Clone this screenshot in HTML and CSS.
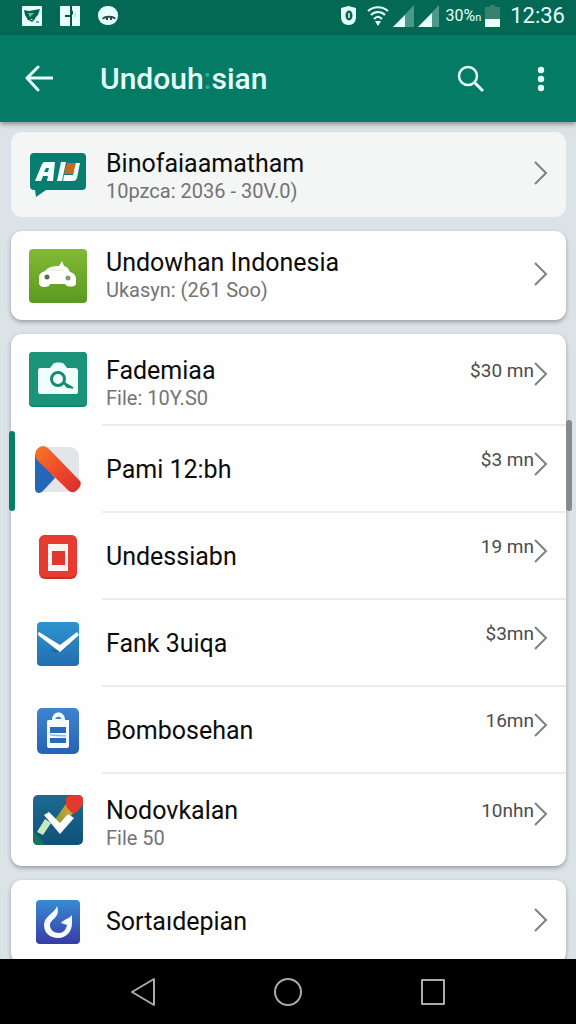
FILE: index.html
```html
<!DOCTYPE html>
<html lang="id">

<head>
    <meta charset="UTF-8">
    <meta name="viewport" content="width=device-width, initial-scale=1">
    <title>Undouh:sian</title>
    <link rel="stylesheet" href="styles.css">
</head>

<body>
    <div class="status">
        <div class="status-left">
            <svg width="20" height="20" viewBox="0 0 20 20"><rect width="20" height="20" rx="1" fill="#e6fffa"/><path d="M2 4l5 1 11-2-2 6-4 4H6L3 9z" fill="#04664f"/><path d="M4 8l2 5 4 2 3-3" fill="none" stroke="#04664f" stroke-width="1.5"/><path d="M6 7h6l-4 4z" fill="#78b7a7"/><path d="M14 16h3" stroke="#04664f"/></svg>
            <svg width="20" height="20" viewBox="0 0 20 20"><rect width="20" height="20" rx="1" fill="#e6fffa"/><path d="M11 0v20M5 10h6" stroke="#04554a" stroke-width="2"/><path d="M11 7l2-3v5z" fill="#04554a"/><path d="M15 7v4" stroke="#9fd0c5"/></svg>
            <svg width="20" height="20" viewBox="0 0 20 20"><rect width="20" height="19" rx="9" fill="#e6fffa"/><path d="M5 13c1-3 11-3 12 0M9 12v2M13 12v2" fill="none" stroke="#234f46" stroke-width="2"/></svg>
        </div>
        <div class="status-right">
            <svg width="17" height="21" viewBox="0 0 17 21"><path d="M1 3l7.500-2L16 3v9c0 5-3 8-7.500 8S1 17 1 12z" fill="#e6fffa"/><ellipse cx="9" cy="10.500" rx="3.500" ry="5" fill="#04664f"/><path d="M9 8v5" stroke="#e6fffa" stroke-width="1.500"/></svg>
            <svg class="wifi" width="22" height="20" viewBox="0 0 22 20"><path d="M1 5c6-5 14-5 20 0M4 9c4-4 10-4 14 0M7 13c3-3 5-3 8 0" fill="none" stroke="#e6fffa" stroke-width="2.200"/><path d="M8 15h6l-3 5z" fill="#e6fffa"/></svg>
            <svg width="21" height="22" viewBox="0 0 21 22"><path d="M21 0v22H0z" fill="#4c9988"/><path d="M12 10v12H0z" fill="#e6fffa"/></svg>
            <svg width="21" height="22" viewBox="0 0 21 22"><path d="M21 0v22H0z" fill="#4c9988"/><path d="M14 8v14H0z" fill="#e6fffa"/></svg>
            <span class="percent">30%<small>n</small></span>
            <svg width="15" height="22" viewBox="0 0 15 22"><path d="M5 0h5v2h5v13H0V2h5z" fill="#39806f"/><path d="M0 14h15v8H0z" fill="#e6fffa"/></svg>
            <time class="clock">12:36</time>
        </div>
    </div>

    <header class="bar">
        <button class="icon-btn" aria-label="Kembali">
            <svg width="28" height="28" viewBox="0 0 28 28"><path d="M27 13H2M13 2L2 13l11 12" fill="none" stroke="#e6fffa" stroke-width="3" stroke-linecap="round" stroke-linejoin="round"/></svg>
        </button>
        <h1>Undouh<span>:</span>sian</h1>
        <button class="icon-btn" aria-label="Cari">
            <svg width="28" height="28" viewBox="0 0 28 28"><circle cx="11" cy="11" r="9" fill="none" stroke="#e6fffa" stroke-width="2.500"/><path d="M17 17l9 9" stroke="#e6fffa" stroke-width="3"/></svg>
        </button>
        <button class="icon-btn" aria-label="Menu">
            <svg width="8" height="26" viewBox="0 0 8 26"><g fill="#e6fffa"><circle cx="4" cy="4" r="3.200"/><circle cx="4" cy="13" r="3.200"/><circle cx="4" cy="22" r="3.200"/></g></svg>
        </button>
    </header>

    <main>
        <section class="card muted">
            <a href="#" class="row">
                <span class="icon">
                    <svg width="58" height="46" viewBox="0 0 58 46"><path d="M5 1h48q4 0 4 4v29q0 4-4 4H17l-10 7-1-7H5q-4 0-4-4V5q0-4 4-4z" fill="#087e70"/><path d="M6 29L13 12q1-2 3-2h10l-2 19h-6l1-5h-5l-2 5zM17 16l-2 4h4l1-4z" fill="#f2fffb" fill-rule="evenodd"/><path d="M28 29l4-19h5l-4 19zM34 29l1-6h9l2-12h5l-3 15q-1 3-4 3z" fill="#f2fffb"/><path d="M38 11h9l-3 11h-9z" fill="#c96a1b"/></svg>
                </span>
                <span class="body"><span class="text"><b>Binofaiaamatham</b><small>10pzca: 2036 - 30V.0)</small></span></span>
                <svg class="chevron" width="14" height="24" viewBox="0 0 14 24"><path d="M1 1l11 11L1 23"/></svg>
            </a>
        </section>

        <section class="card">
            <a href="#" class="row">
                <span class="icon">
                    <svg width="58" height="54" viewBox="0 0 58 54"><defs><linearGradient id="green" x2="0" y2="1"><stop stop-color="#83b936"/><stop offset="1" stop-color="#5b991f"/></linearGradient></defs><rect width="58" height="54" rx="4" fill="url(#green)"/><path d="M10 28c0-3 3-5 6-6 3-4 8-5 14-5l3-5 2 5c4 1 5 4 6 6 4 1 6 4 6 7v4c0 4-5 4-9 3l-2-2H21l-1 2c-5 2-10 1-10-3z" fill="#fff"/><path d="M18 21h17" stroke="#dbeccf"/><circle cx="18" cy="28" r="2.500" fill="#566f50"/><circle cx="39" cy="29" r="2.500" fill="#7c9d74"/></svg>
                </span>
                <span class="body"><span class="text"><b>Undowhan Indonesia</b><small>Ukasyn: (261 Soo)</small></span></span>
                <svg class="chevron" width="14" height="24" viewBox="0 0 14 24"><path d="M1 1l11 11L1 23"/></svg>
            </a>
        </section>

        <section class="card list">
            <a href="#" class="row">
                <span class="icon">
                    <svg width="58" height="56" viewBox="0 0 58 56"><rect width="58" height="55" rx="4" fill="#13866e"/><rect width="58" height="53" rx="4" fill="#1b9379"/><path d="M11 16h10l3-4c1-2 10-2 11 0l3 4h8q3 0 3 3v21q0 2-3 2H12q-3 0-3-2V19q0-3 2-3z" fill="#effffb"/><circle cx="29" cy="27" r="6.500" fill="none" stroke="#1b8873" stroke-width="3"/><path d="M34 30l10 6-6-1z" fill="#1b8873" stroke="#1b8873" stroke-width="1.500"/></svg>
                </span>
                <span class="body"><span class="text"><b>Fademiaa</b><small>File: 10Y.S0</small></span><span class="amount">$30 mn</span></span>
                <svg class="chevron" width="14" height="24" viewBox="0 0 14 24"><path d="M1 1l11 11L1 23"/></svg>
            </a>
            <a href="#" class="row selected">
                <span class="icon">
                    <svg width="46" height="48" viewBox="0 0 46 48"><defs><linearGradient id="red" x2="1" y2="1"><stop stop-color="#f47b27"/><stop offset=".5" stop-color="#ef4a2c"/><stop offset="1" stop-color="#d92c2c"/></linearGradient></defs><rect x="1" y="1" width="43" height="45" rx="9" fill="#e4e5e9"/><path d="M0 8l20 24L7 46q-7 3-7-4z" fill="#2467b8"/><path d="M2 3q6-6 12 0l31 32q2 3-1 7l-3 3q-4 3-8-1L3 15q-5-6-1-12z" fill="url(#red)"/></svg>
                </span>
                <span class="body"><span class="text"><b>Pami 12:bh</b></span><span class="amount">$3 mn</span></span>
                <svg class="chevron" width="14" height="24" viewBox="0 0 14 24"><path d="M1 1l11 11L1 23"/></svg>
            </a>
            <a href="#" class="row">
                <span class="icon">
                    <svg width="38" height="44" viewBox="0 0 38 44"><rect width="38" height="44" rx="6" fill="#c9302a"/><rect width="38" height="42" rx="6" fill="#e93a32"/><path d="M9 9h20v27H9z" fill="#fff3ef"/><path d="M13 16h13v14H13z" fill="#df382f"/></svg>
                </span>
                <span class="body"><span class="text"><b>Undessiabn</b></span><span class="amount">19 mn</span></span>
                <svg class="chevron" width="14" height="24" viewBox="0 0 14 24"><path d="M1 1l11 11L1 23"/></svg>
            </a>
            <a href="#" class="row">
                <span class="icon">
                    <svg width="44" height="44" viewBox="0 0 44 44"><defs><linearGradient id="mail" x2="0" y2="1"><stop stop-color="#2e93cf"/><stop offset="1" stop-color="#226eb1"/></linearGradient></defs><rect x="1" width="42" height="44" rx="4" fill="url(#mail)"/><path d="M14 27l12 2-8 2z" fill="#1f66a2"/><path d="M3 10l21 13L41 10l2 3-19 17L3 14q-2-2 0-4z" fill="#fff"/></svg>
                </span>
                <span class="body"><span class="text"><b>Fank 3uiqa</b></span><span class="amount">$3mn</span></span>
                <svg class="chevron" width="14" height="24" viewBox="0 0 14 24"><path d="M1 1l11 11L1 23"/></svg>
            </a>
            <a href="#" class="row">
                <span class="icon">
                    <svg width="42" height="46" viewBox="0 0 42 46"><defs><linearGradient id="clip" x2="0" y2="1"><stop stop-color="#3d84cf"/><stop offset="1" stop-color="#2762b5"/></linearGradient></defs><rect width="42" height="46" rx="5" fill="url(#clip)"/><path d="M11 12h4c0-10 13-10 13 0h4v26q0 2-2 2H12q-2 0-2-2V14q0-2 1-2z" fill="#f3fbff"/><path d="M18 11q3-5 7 0z" fill="#3d7fc9"/><path d="M13 19h16v6H13zM13 30h16v5H13z" fill="#286abb"/><path d="M13 27l16 1" stroke="#8eb9e6" stroke-width="1.500"/></svg>
                </span>
                <span class="body"><span class="text"><b>Bombosehan</b></span><span class="amount">16mn</span></span>
                <svg class="chevron" width="14" height="24" viewBox="0 0 14 24"><path d="M1 1l11 11L1 23"/></svg>
            </a>
            <a href="#" class="row">
                <span class="icon">
                    <svg width="50" height="50" viewBox="0 0 50 50"><defs><linearGradient id="chart" x2="0" y2="1"><stop stop-color="#1c6a91"/><stop offset="1" stop-color="#105179"/></linearGradient><linearGradient id="pen" x1="1" x2="0" y2="1"><stop stop-color="#e7a62d"/><stop offset="1" stop-color="#6f9d38"/></linearGradient></defs><rect width="50" height="50" rx="5" fill="url(#chart)"/><path d="M0 35l12 15H5q-5 0-5-5z" fill="#16745a"/><path d="M33 9l8 8-12 15-8-6z" fill="url(#pen)"/><path d="M12 24l6 4-8 12-6-3z" fill="#c9e8bd"/><path d="M33 3q2-3 8-3h4q5 0 5 5v4q-3 6-9 10-8-5-8-10z" fill="#e23a2c"/><path d="M11 20l5-3 11 11 8-9 6 4-14 16z" fill="#fff"/></svg>
                </span>
                <span class="body"><span class="text"><b>Nodovkalan</b><small>File 50</small></span><span class="amount">10nhn</span></span>
                <svg class="chevron" width="14" height="24" viewBox="0 0 14 24"><path d="M1 1l11 11L1 23"/></svg>
            </a>
        </section>

        <section class="card">
            <a href="#" class="row single">
                <span class="icon">
                    <svg width="44" height="44" viewBox="0 0 44 44"><defs><linearGradient id="flame" x2="0" y2="1"><stop stop-color="#378bd3"/><stop offset="1" stop-color="#383ca6"/></linearGradient></defs><rect width="44" height="44" rx="4" fill="url(#flame)"/><path d="M21 6C19 13 8 16 8 25c0 8 6 13 14 13 9 0 14-7 14-15V15c-3 4-8 4-11 8l6 2c-1 5-4 8-8 8-5 0-9-3-9-8 0-6 11-7 7-19z" fill="#f6fbff"/></svg>
                </span>
                <span class="body"><span class="text"><b>Sortaıdepian</b></span></span>
                <svg class="chevron" width="14" height="24" viewBox="0 0 14 24"><path d="M1 1l11 11L1 23"/></svg>
            </a>
        </section>
        <div class="thumb"></div>
    </main>

    <nav>
        <button aria-label="Kembali"><svg width="26" height="30" viewBox="0 0 26 30"><path d="M24 2v26L2 15z"/></svg></button>
        <button aria-label="Beranda"><svg width="30" height="30" viewBox="0 0 30 30"><circle cx="15" cy="15" r="13"/></svg></button>
        <button aria-label="Terbaru"><svg width="26" height="28" viewBox="0 0 26 28"><path d="M2 2h22v24H2z"/></svg></button>
    </nav>
</body>

</html>
```
FILE: styles.css
```css
* {
    margin: 0;
    padding: 0;
    box-sizing: border-box;
}
body {
    display: flex;
    flex-direction: column;
    height: 100vh;
    font-family: Roboto, "Liberation Sans", sans-serif;
    background-color: #dce3e6;
    color: #0c0c0c;
}
svg {
    display: block;
    flex: none;
}
button {
    border: 0;
    background: none;
}

/* status bar */
.status {
    flex: none;
    display: flex;
    justify-content: space-between;
    align-items: center;
    height: 35px;
    padding: 0 11px 4px 22px;
    background-color: #036854;
    color: #e6fffa;
}
.status-left {
    display: flex;
    gap: 18px;
}
.status-right {
    display: flex;
    align-items: center;
    gap: 4px;
}
.wifi {
    margin-left: 6px;
}
.percent {
    margin-left: 2px;
    font-size: 16px;
}
.percent small {
    font-size: 11px;
}
.clock {
    margin-left: 6px;
    font-size: 22px;
}

/* app bar */
.bar {
    flex: none;
    display: flex;
    align-items: center;
    height: 87px;
    padding: 0 10px 0 14px;
    background-color: #047c65;
    color: #e6fffa;
    box-shadow: 0 2px 5px rgba(0, 0, 0, .4);
    z-index: 1;
}
.bar h1 {
    flex: 1;
    padding-left: 36px;
    font-size: 30px;
    font-weight: 500;
}
.bar h1 span {
    color: #2fae8c;
}
.icon-btn {
    display: flex;
    justify-content: center;
    width: 50px;
    padding: 10px 0;
}
.icon-btn + .icon-btn {
    margin-left: 20px;
}

/* cards */
main {
    position: relative;
    flex: 1;
    display: flex;
    flex-direction: column;
    gap: 14px;
    min-height: 0;
    padding: 10px 10px 0 11px;
    overflow: hidden;
}
.card {
    flex: none;
    border-radius: 11px;
    background-color: #fefefe;
    box-shadow: 0 2px 4px rgba(60, 75, 85, .45);
}
.muted {
    background-color: #f4f5f5;
    box-shadow: none;
}
.row {
    position: relative;
    display: flex;
    align-items: center;
    min-height: 89px;
    padding-left: 18px;
    color: inherit;
    text-decoration: none;
}
.muted .row {
    min-height: 85px;
}
.list .row {
    min-height: 87px;
}
.list .row:first-child,
.list .row:last-child {
    min-height: 92px;
}
.icon {
    flex: none;
    display: flex;
    justify-content: center;
    width: 58px;
}
.body {
    flex: 1;
    align-self: stretch;
    display: flex;
    align-items: center;
    justify-content: space-between;
    margin-left: 15px;
    padding-left: 4px;
}
.text b {
    display: block;
    font-size: 25px;
    line-height: 28px;
    font-weight: 400;
}
.text small {
    display: block;
    font-size: 20px;
    line-height: 26px;
    color: #747474;
}
.muted .text {
    padding-top: 4px;
}
.list .row:first-child .text,
.list .row:last-child .text {
    padding-top: 8px;
}
.amount {
    padding-bottom: 20px;
    font-size: 19px;
    color: #4c4c4c;
}
.chevron {
    margin-right: 18px;
    margin-bottom: 4px;
}
.chevron path {
    fill: none;
    stroke: #808080;
    stroke-width: 2;
}
.list .chevron {
    margin-bottom: 12px;
}
/* divider runs under the text, up to the card's edge */
.list .row:not(:last-child)::after {
    content: "";
    position: absolute;
    left: 91px;
    right: 0;
    bottom: 0;
    height: 2px;
    background-color: #ececec;
}
.selected::before {
    content: "";
    position: absolute;
    left: -2px;
    top: 5px;
    bottom: 2px;
    width: 6px;
    border-radius: 3px;
    background-color: #087f65;
}
.single {
    min-height: 84px;
}
.thumb {
    position: absolute;
    top: 298px;
    right: 4px;
    width: 6px;
    height: 91px;
    border-radius: 3px;
    background-color: #858b8d;
}

/* navigation keys */
nav {
    flex: none;
    display: flex;
    justify-content: center;
    gap: 90px;
    height: 65px;
    background-color: #000;
}
nav button {
    display: flex;
    align-items: center;
    justify-content: center;
    width: 55px;
}
nav path,
nav circle {
    fill: none;
    stroke: #aaa;
    stroke-width: 2;
    stroke-linejoin: round;
}
```
